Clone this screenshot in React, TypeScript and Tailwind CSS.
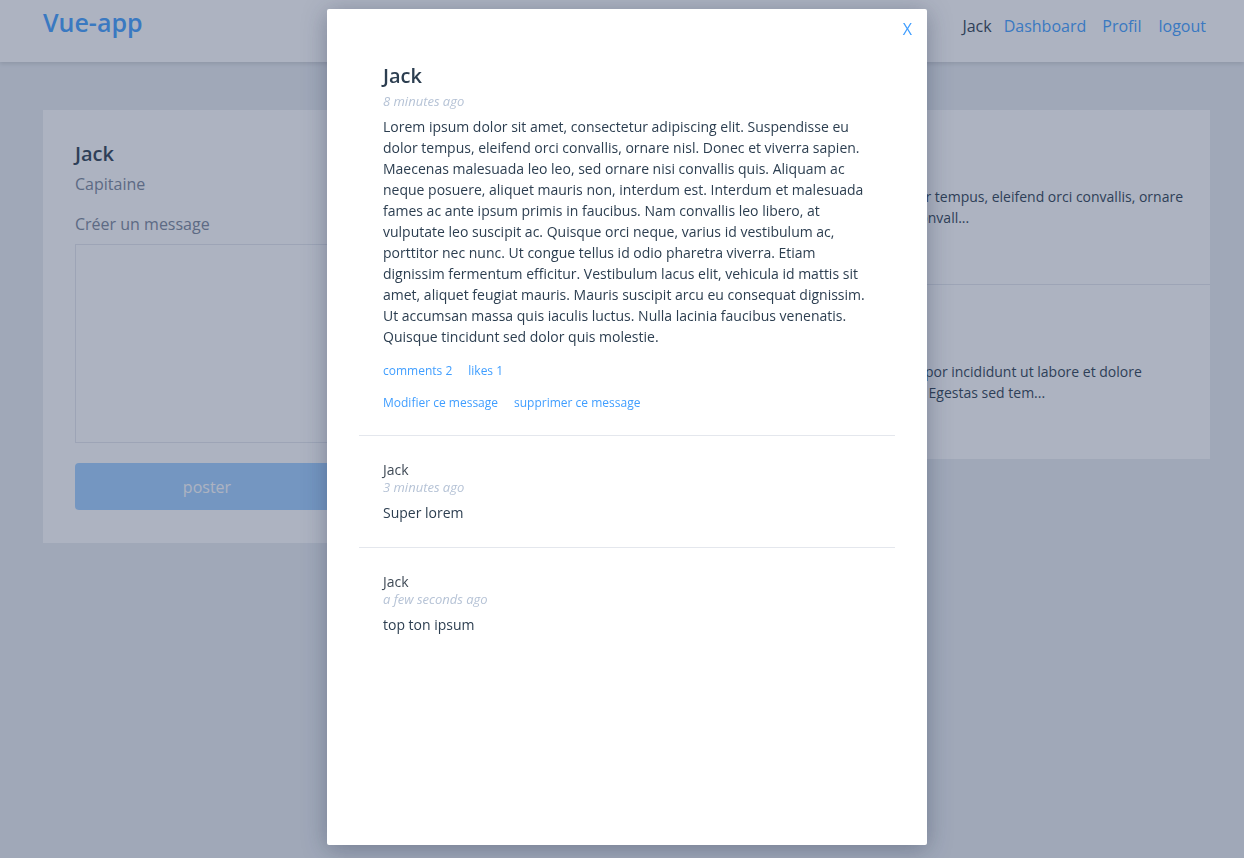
import React from 'react';

const font = { fontFamily: '"Open Sans", "Liberation Sans", sans-serif' };

const Header: React.FC = () => (
  <header className="h-[62px] bg-white shadow-[0_2px_4px_rgba(0,0,0,0.12)] flex items-start justify-between pl-[43px] pr-[38px]">
    <h1 className="text-[25px] font-semibold text-[#409eff] leading-[34px] mt-[5px]">Vue-app</h1>
    <nav className="flex items-center text-base leading-6 mt-[14px]">
      <span className="text-[#2c3e50] mr-3">Jack</span>
      <a className="text-[#409eff] mr-4">Dashboard</a>
      <a className="text-[#409eff] mr-[17px]">Profil</a>
      <a className="text-[#409eff]">logout</a>
    </nav>
  </header>
);

const posts = [
  {
    id: 1,
    time: '8 minutes ago',
    lines: [
      'Lorem ipsum dolor sit amet, consectetur adipiscing elit. Suspendisse eu dolor tempus, eleifend orci convallis, ornare',
      'nisl. Donec et viverra sapien. Maecenas malesuada leo leo, sed ornare nisi convall...',
    ],
  },
  {
    id: 2,
    time: '1 hour ago',
    lines: [
      'Lorem ipsum dolor sit amet, consectetur adipiscing elit, sed do eiusmod tempor incididunt ut labore et dolore',
      'magna aliqua. Quis ipsum suspendisse ultrices gravida eu commodo viverra. Egestas sed tem...',
    ],
  },
];

const Page: React.FC = () => (
  <main className="flex items-start pt-[48px] pl-[43px] pr-[34px]">
    <section className="w-[328px] h-[433px] shrink-0 bg-white p-8 flex flex-col">
      <h2 className="text-xl font-semibold leading-6 text-[#2c3e50]">Jack</h2>
      <p className="text-base leading-6 text-[#7a8699] mt-1.5">Capitaine</p>
      <p className="text-base leading-6 text-[#7a8699] mt-4">Créer un message</p>
      <textarea className="mt-2 h-[199px] w-full border border-[#e4e7ed] bg-white resize-none" />
      <button className="mt-5 h-[47px] w-full rounded-sm bg-[#a0cfff] text-white text-base">poster</button>
    </section>
    <section className="flex-1 min-w-0 overflow-hidden bg-white ml-6">
      {posts.map((p, i) => (
        <article key={p.id} className={`px-8 ${i > 0 ? 'border-t border-[#e4e7ed] h-[175px] pt-8' : 'h-[174px] pt-8'}`}>
          <h3 className="text-xl font-semibold leading-6 text-[#2c3e50]">Jack</h3>
          <p className="text-[13px] italic text-[#b6c3d6] leading-4">{p.time}</p>
          <p className="text-sm leading-[21px] text-[#2c3e50] mt-[4px]">
            {p.lines.map((l) => (
              <span key={l} className="block whitespace-nowrap">{l}</span>
            ))}
          </p>
        </article>
      ))}
    </section>
  </main>
);

const Comment: React.FC<{ time: string; text: string }> = ({ time, text }) => (
  <div className="border-t border-[#e4e7ed] px-6 pt-6 pb-6">
    <p className="text-sm leading-5 text-[#3f4a56]">Jack</p>
    <p className="text-[13px] italic leading-[14px] text-[#b6c3d6]">{time}</p>
    <p className="text-sm leading-[21px] text-[#2c3e50] mt-2">{text}</p>
  </div>
);

const Modal: React.FC = () => (
  <div className="fixed inset-0 bg-[rgba(50,65,100,0.4)] flex justify-center items-start pt-[9px] pl-[10px]">
    <div className="relative w-[600px] h-[836px] bg-white shadow-[0_4px_24px_rgba(30,40,70,0.35)] rounded-[2px] p-8">
      <button className="absolute top-2 right-[15px] text-base leading-6 text-[#409eff]">X</button>
      <div className="px-6 pt-[23px] pb-6">
        <h2 className="text-xl font-semibold leading-6 text-[#2c3e50]">Jack</h2>
        <p className="text-[13px] italic leading-4 text-[#b6c3d6] mt-[5px]">8 minutes ago</p>
        <p className="text-sm leading-[21px] text-[#2c3e50] mt-[7px]">
          Lorem ipsum dolor sit amet, consectetur adipiscing elit. Suspendisse eu dolor tempus, eleifend orci convallis, ornare nisl. Donec et viverra sapien. Maecenas malesuada leo leo, sed ornare nisi convallis quis. Aliquam ac neque posuere, aliquet mauris non, interdum est. Interdum et malesuada fames ac ante ipsum primis in faucibus. Nam convallis leo libero, at vulputate leo suscipit ac. Quisque orci neque, varius id vestibulum ac, porttitor nec nunc. Ut congue tellus id odio pharetra viverra. Etiam dignissim fermentum efficitur. Vestibulum lacus elit, vehicula id mattis sit amet, aliquet feugiat mauris. Mauris suscipit arcu eu consequat dignissim. Ut accumsan massa quis iaculis luctus. Nulla lacinia faucibus venenatis. Quisque tincidunt sed dolor quis molestie.
        </p>
        <div className="flex gap-4 text-xs leading-4 text-[#409eff] mt-4">
          <a>comments 2</a>
          <a>likes 1</a>
        </div>
        <div className="flex gap-4 text-xs leading-4 text-[#409eff] mt-4">
          <a>Modifier ce message</a>
          <a>supprimer ce message</a>
        </div>
      </div>
      <Comment time="3 minutes ago" text="Super lorem" />
      <Comment time="a few seconds ago" text="top ton ipsum" />
    </div>
  </div>
);

const App: React.FC = () => (
  <div style={font} className="relative h-[858px] overflow-hidden bg-[#e9edf1]">
    <Header />
    <Page />
    <Modal />
  </div>
);

export default App;
